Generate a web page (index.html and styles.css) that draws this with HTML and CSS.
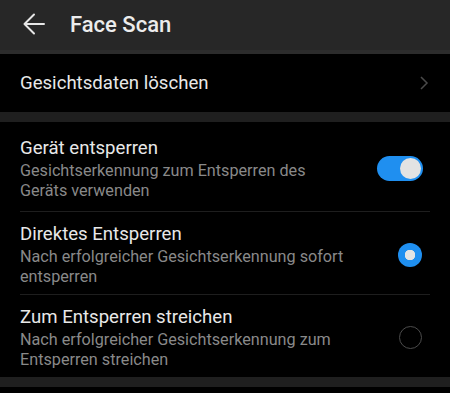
FILE: index.html
```html
<!DOCTYPE html>
<html lang="de">
<head>
  <meta charset="UTF-8" />
  <meta name="viewport" content="width=device-width, initial-scale=1.0"/>
  <title>Face Scan</title>
  <link rel="stylesheet" href="styles.css">
</head>
<body>
  <header class="topbar">
    <svg class="back" width="24" height="24" viewBox="0 0 24 24">
      <path d="M22 12H2.5M12 2.5L2.5 12L12 21.5" fill="none" stroke="#e6e6e6" stroke-width="2" stroke-linecap="round" stroke-linejoin="round"/>
    </svg>
    <h1 class="title">Face Scan</h1>
  </header>

  <section class="group">
    <div class="row row-link">
      <span class="row-title">Gesichtsdaten löschen</span>
      <svg class="chevron" width="10" height="16" viewBox="0 0 10 16">
        <path d="M2 2l6 6-6 6" fill="none" stroke="#4a4a4a" stroke-width="1.5"/>
      </svg>
    </div>
  </section>

  <div class="spacer"></div>

  <section class="group">
    <div class="row row-first">
      <div class="row-text">
        <div class="row-title">Gerät entsperren</div>
        <div class="row-sub">Gesichtserkennung zum Entsperren des Geräts verwenden</div>
      </div>
      <div class="switch on"><span class="knob"></span></div>
    </div>
    <div class="row">
      <div class="row-text">
        <div class="row-title">Direktes Entsperren</div>
        <div class="row-sub">Nach erfolgreicher Gesichtserkennung sofort entsperren</div>
      </div>
      <div class="radio checked"></div>
    </div>
    <div class="row">
      <div class="row-text">
        <div class="row-title">Zum Entsperren streichen</div>
        <div class="row-sub">Nach erfolgreicher Gesichtserkennung zum Entsperren streichen</div>
      </div>
      <div class="radio"></div>
    </div>
  </section>

  <div class="spacer"></div>
  <section class="group tail"></section>
</body>
</html>
```

FILE: styles.css
```css
body {
  margin: 0;
  background: #000;
  font-family: Roboto, 'Noto Sans', sans-serif;
  color: #e6e6e6;
  overflow: hidden;
}
.topbar {
  height: 50px;
  background: #272727;
  border-bottom: 4px solid #2c2c2c;
  display: flex;
  align-items: center;
  padding-left: 22px;
}
.back {
  margin-top: -2px;
}
.title {
  margin: 0 0 0 24px;
  font-size: 22px;
  font-weight: 500;
  color: #ececec;
  margin-top: -2px;
}
.group {
  background: #000;
}
.spacer {
  height: 10px;
  background: #1f1f1f;
}
.row {
  display: flex;
  align-items: center;
  margin: 0 20px;
  padding: 11px 0 8px;
  border-top: 1px solid #1e1e1e;
}
.row-first {
  border-top: none;
  padding: 15px 0 11px;
}
.row-link {
  border-top: none;
  height: 58px;
  padding: 0;
  box-sizing: border-box;
}
.row-text {
  flex: 1;
  padding-right: 50px;
}
.row-title {
  flex: 1;
  font-size: 18.6px;
  line-height: 22px;
  color: #e8e8e8;
}
.row-sub {
  margin-top: 2px;
  font-size: 16.2px;
  line-height: 19.5px;
  color: #898989;
}
.chevron {
  margin-right: 1px;
}
.switch {
  width: 46px;
  height: 25px;
  border-radius: 13px;
  background: #1f8ff0;
  position: relative;
  flex: none;
  margin-right: 7px;
}
.knob {
  position: absolute;
  right: 2px;
  top: 2px;
  width: 21px;
  height: 21px;
  border-radius: 50%;
  background: #e3e3e3;
}
.radio {
  width: 21px;
  height: 21px;
  border-radius: 50%;
  border: 1.5px solid #4c4c4c;
  flex: none;
  margin-right: 8px;
}
.radio.checked {
  border: none;
  width: 24px;
  height: 24px;
  background: radial-gradient(circle, #e4e4e4 0 5px, #1f8ff0 5.5px);
}
.tail {
  height: 10px;
}
```
